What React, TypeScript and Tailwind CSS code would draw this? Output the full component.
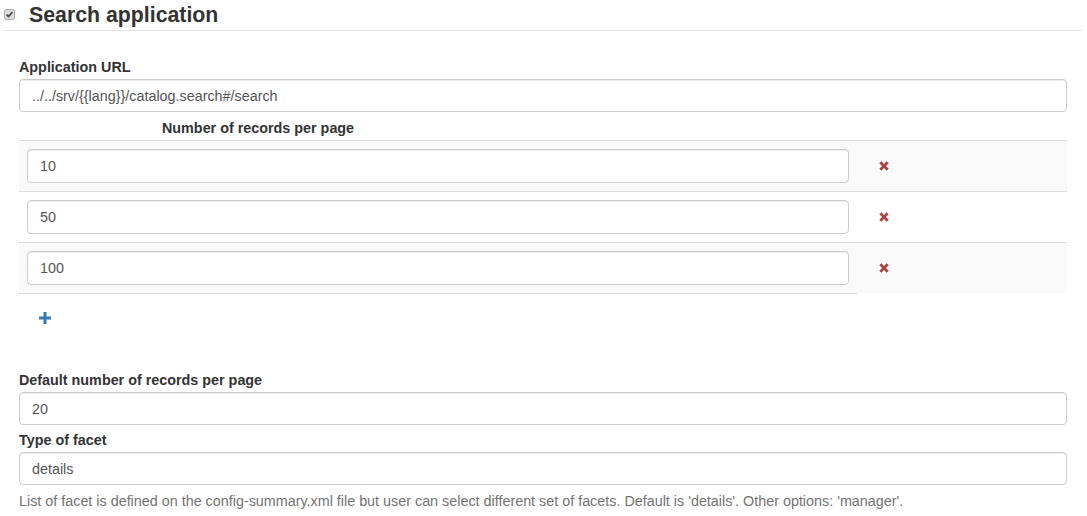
import React from "react";

const perPage = ["10", "50", "100"];

const Field = ({ value, h = "h-[33px]" }: { value: string; h?: string }) => (
  <input
    readOnly
    defaultValue={value}
    className={`block w-full ${h} rounded-[4px] border border-[#ccc] bg-white px-[12px] text-[14.35px] text-[#555] shadow-[inset_0_1px_1px_rgba(0,0,0,0.075)] outline-none font-['Liberation_Sans',Arial,sans-serif]`}
  />
);

const Label = ({ children }: { children: React.ReactNode }) => (
  <label className="block font-bold leading-[20px] mb-[2px]">{children}</label>
);

const RemoveIcon = () => (
  <svg width="10" height="10" viewBox="0 0 10 10">
    <path d="M1.3 1.3L8.7 8.7M8.7 1.3L1.3 8.7" stroke="#a94442" strokeWidth="2.8" />
  </svg>
);

const PlusIcon = () => (
  <svg width="12" height="12" viewBox="0 0 12 12" className="block">
    <rect x="4.5" y="0" width="3" height="12" fill="#337ab7" />
    <rect x="0" y="4.5" width="12" height="3" fill="#337ab7" />
  </svg>
);

export default function App() {
  return (
    <div className="min-h-screen bg-white font-['Liberation_Sans',Arial,sans-serif] text-[14.35px] text-[#333]">
      <div className="px-[4px]">
        <div className="flex items-center border-b border-[#e5e5e5] pt-[3px] pb-[3px]">
          <svg width="11" height="11" viewBox="0 0 11 11" className="mr-[14px] -mt-[1px]">
            <rect x="0.5" y="0.5" width="10" height="10" rx="2" fill="#dedede" stroke="#a5a5a5" />
            <path d="M2.6 5.6L4.5 7.5L8.4 3.2" fill="none" stroke="#4a4a4a" strokeWidth="1.8" />
          </svg>
          <h2 className="text-[21.3px] font-bold leading-[24px]">Search application</h2>
        </div>
      </div>

      <div className="pl-[19px] pr-[20px] pt-[26px]">
        <Label>Application URL</Label>
        <Field value="../../srv/{{lang}}/catalog.search#/search" />

        <div className="mt-[6px] pb-[2px] pl-[143px] font-bold leading-[20px]">
          Number of records per page
        </div>

        <div>
          {perPage.map((v, i) => (
            <div
              key={v}
              className={`flex border-t border-[#ddd] ${i % 2 === 0 ? "bg-[#f9f9f9]" : ""}`}
            >
              <div className="w-[838px] p-[8px]">
                <Field value={v} h="h-[34px]" />
              </div>
              <div className="flex flex-1 items-center pl-[22px]">
                <RemoveIcon />
              </div>
            </div>
          ))}
          <div className="w-[838px] border-t border-[#ddd]">
            <div className="pl-[20px] pt-[18px]">
              <PlusIcon />
            </div>
          </div>
        </div>

        <div className="mt-[46px]">
          <Label>Default number of records per page</Label>
          <Field value="20" />
        </div>

        <div className="mt-[5px]">
          <Label>Type of facet</Label>
          <Field value="details" />
        </div>

        <p className="mt-[6px] leading-[20px] text-[#737373]">
          List of facet is defined on the config-summary.xml file but user can select different set of facets. Default is 'details'. Other options: 'manager'.
        </p>
      </div>
    </div>
  );
}
